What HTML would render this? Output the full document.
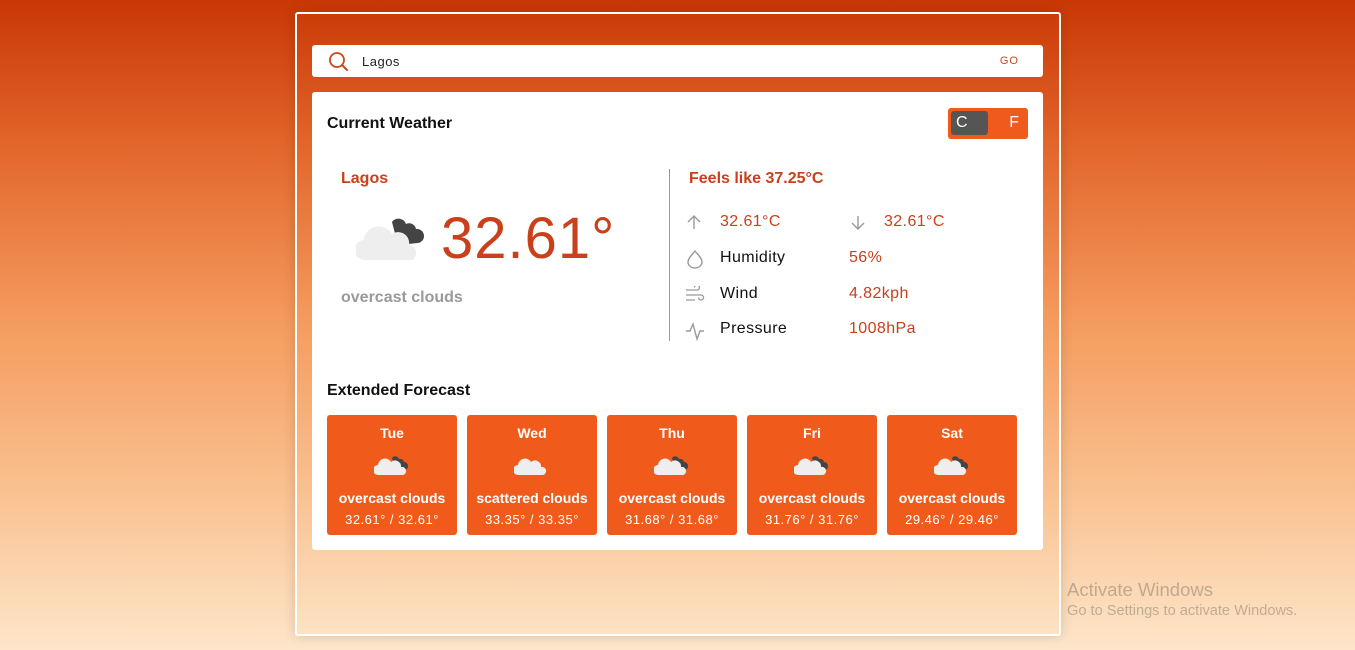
<!DOCTYPE html>
<html><head><meta charset="utf-8"><style>
*{box-sizing:border-box;margin:0;padding:0}
body{width:1355px;height:650px;overflow:hidden;font-family:"Liberation Sans",Roboto,sans-serif;background:linear-gradient(180deg,#c93705 0%,#e2652a 22%,#f59c5f 50%,#f9c08f 75%,#fde6c9 100%);position:relative}
.wrap{position:absolute;left:295px;top:12px;width:766px;height:624px;border:2px solid #fff;border-radius:3px;box-shadow:0 0 12px rgba(0,0,0,.15)}
.search{position:absolute;left:312px;top:45px;width:731px;height:32px;background:#fff;border-radius:3px}
.search .t{position:absolute;left:50px;top:9px;font-size:13px;color:#222;letter-spacing:.5px}
.search .go{position:absolute;right:24px;top:10px;font-size:11px;color:#c9481c;letter-spacing:1px}
.card{position:absolute;left:312px;top:92px;width:731px;height:458px;background:#fff;border-radius:3px}
.abs{position:absolute}
.or{color:#c9401a}
.h{font-weight:bold;font-size:16px;color:#111}
.tog{left:636px;top:16px;width:80px;height:31px;background:#f05a1c;border-radius:3px}
.tog .k{position:absolute;left:3px;top:3px;width:37px;height:24px;background:#555;border-radius:3px;color:#fff;font-size:16px;padding:3px 0 0 5px}
.tog .f{position:absolute;right:9px;top:6px;color:#fff;font-size:16px}
.row{font-size:16px;letter-spacing:.4px}
.fc{position:absolute;top:323px;width:130px;height:120px;background:#f05a1a;border-radius:3px;color:#fff;text-align:center}
.fc .d{position:absolute;top:10px;width:100%;font-weight:bold;font-size:14px}
.fc .ds{position:absolute;top:75px;width:100%;font-weight:bold;font-size:14px}
.fc .tp{position:absolute;top:97px;width:100%;font-size:13px;letter-spacing:.5px}
.fc svg{position:absolute;left:47px;top:37px}
</style></head><body>
<div class="wrap"></div>
<div class="search">
<svg class="abs" style="left:16px;top:6px" width="22" height="22" viewBox="0 0 22 22"><circle cx="9" cy="9" r="7" fill="none" stroke="#c9481c" stroke-width="1.8"/><path d="M14 14L19 19" stroke="#c9481c" stroke-width="2" stroke-linecap="round"/></svg>
<div class="t">Lagos</div><div class="go">GO</div></div>
<div class="card">
<div class="abs h" style="left:15px;top:23px">Current Weather</div>
<div class="abs tog"><div class="k">C</div><div class="f">F</div></div>
<div class="abs or" style="left:29px;top:78px;font-size:16px;font-weight:bold">Lagos</div>
<svg class="abs" style="left:44px;top:120px" width="75" height="50" viewBox="0 0 75 50"><path d="M36 10a8 8 0 0 1 14 2a7 7 0 0 1 10 5a7 7 0 0 1 8 7a7 7 0 0 1-6 7l-20 2z" fill="#444"/><path d="M9 48a10 10 0 0 1-1-20a15 15 0 0 1 28-6a11 11 0 0 1 17 11a8 8 0 0 1 3 15z" fill="#eee"/></svg>
<div class="abs or" style="left:129px;top:113px;font-size:58px;letter-spacing:1px">32.61°</div>
<div class="abs" style="left:29px;top:197px;font-size:16px;font-weight:bold;color:#999">overcast clouds</div>
<div class="abs" style="left:357px;top:77px;width:1px;height:172px;background:#999"></div>
<div class="abs or" style="left:377px;top:78px;font-size:16px;font-weight:bold">Feels like 37.25°C</div>
<svg class="abs" style="left:374px;top:122px" width="16" height="16" viewBox="0 0 16 16"><path d="M8 15V2M2 8l6-6 6 6" fill="none" stroke="#999" stroke-width="1.4"/></svg>
<div class="abs or row" style="left:408px;top:121px">32.61°C</div>
<svg class="abs" style="left:538px;top:123px" width="16" height="16" viewBox="0 0 16 16"><path d="M8 1v13M2 8l6 6 6-6" fill="none" stroke="#999" stroke-width="1.4"/></svg>
<div class="abs or row" style="left:572px;top:121px">32.61°C</div>
<svg class="abs" style="left:374px;top:157px" width="18" height="20" viewBox="0 0 18 20"><path d="M9 2C6 6 2 9 2 13a7 6 0 0 0 14 0c0-4-4-7-7-11z" fill="none" stroke="#999" stroke-width="1.4"/></svg>
<div class="abs row" style="left:408px;top:157px;color:#111">Humidity</div>
<div class="abs or row" style="left:537px;top:157px">56%</div>
<svg class="abs" style="left:373px;top:194px" width="20" height="18" viewBox="0 0 20 18"><path d="M1 4h11a2.5 2.5 0 1 0-2.5-2.5M1 9h15a2.5 2.5 0 1 1-2.5 2.5M1 14h9" fill="none" stroke="#999" stroke-width="1.3"/></svg>
<div class="abs row" style="left:408px;top:193px;color:#111">Wind</div>
<div class="abs or row" style="left:537px;top:193px">4.82kph</div>
<svg class="abs" style="left:373px;top:229px" width="20" height="20" viewBox="0 0 20 20"><path d="M1 10h4l3-7 4 15 3-8h4" fill="none" stroke="#999" stroke-width="1.4"/></svg>
<div class="abs row" style="left:408px;top:228px;color:#111">Pressure</div>
<div class="abs or row" style="left:537px;top:228px">1008hPa</div>
<div class="abs h" style="left:15px;top:290px">Extended Forecast</div>
<div class="fc" style="left:15px"><div class="d">Tue</div><svg width="36" height="24" viewBox="0 0 36 24"><path d="M18 6a4 4 0 0 1 7 1a4 4 0 0 1 5 3a4 4 0 0 1 4 4a4 4 0 0 1-3 4l-9 1z" fill="#444"/><path d="M4 23a5 5 0 0 1 0-10a7 7 0 0 1 13-3a6 6 0 0 1 10 5a4 4 0 0 1 2 8z" fill="#eee"/></svg><div class="ds">overcast clouds</div><div class="tp">32.61° / 32.61°</div></div>
<div class="fc" style="left:155px"><div class="d">Wed</div><svg width="36" height="24" viewBox="0 0 36 24"><path d="M4 23a5 5 0 0 1 0-10a7 7 0 0 1 13-3a6 6 0 0 1 10 5a4 4 0 0 1 2 8z" fill="#eee"/></svg><div class="ds">scattered clouds</div><div class="tp">33.35° / 33.35°</div></div>
<div class="fc" style="left:295px"><div class="d">Thu</div><svg width="36" height="24" viewBox="0 0 36 24"><path d="M18 6a4 4 0 0 1 7 1a4 4 0 0 1 5 3a4 4 0 0 1 4 4a4 4 0 0 1-3 4l-9 1z" fill="#444"/><path d="M4 23a5 5 0 0 1 0-10a7 7 0 0 1 13-3a6 6 0 0 1 10 5a4 4 0 0 1 2 8z" fill="#eee"/></svg><div class="ds">overcast clouds</div><div class="tp">31.68° / 31.68°</div></div>
<div class="fc" style="left:435px"><div class="d">Fri</div><svg width="36" height="24" viewBox="0 0 36 24"><path d="M18 6a4 4 0 0 1 7 1a4 4 0 0 1 5 3a4 4 0 0 1 4 4a4 4 0 0 1-3 4l-9 1z" fill="#444"/><path d="M4 23a5 5 0 0 1 0-10a7 7 0 0 1 13-3a6 6 0 0 1 10 5a4 4 0 0 1 2 8z" fill="#eee"/></svg><div class="ds">overcast clouds</div><div class="tp">31.76° / 31.76°</div></div>
<div class="fc" style="left:575px"><div class="d">Sat</div><svg width="36" height="24" viewBox="0 0 36 24"><path d="M18 6a4 4 0 0 1 7 1a4 4 0 0 1 5 3a4 4 0 0 1 4 4a4 4 0 0 1-3 4l-9 1z" fill="#444"/><path d="M4 23a5 5 0 0 1 0-10a7 7 0 0 1 13-3a6 6 0 0 1 10 5a4 4 0 0 1 2 8z" fill="#eee"/></svg><div class="ds">overcast clouds</div><div class="tp">29.46° / 29.46°</div></div>
</div>
<div class="abs" style="left:1067px;top:579px;font-size:18.5px;color:rgba(120,110,100,.45)">Activate Windows</div>
<div class="abs" style="left:1067px;top:603px;font-size:14.6px;color:rgba(120,110,100,.45)">Go to Settings to activate Windows.</div>
</body></html>
